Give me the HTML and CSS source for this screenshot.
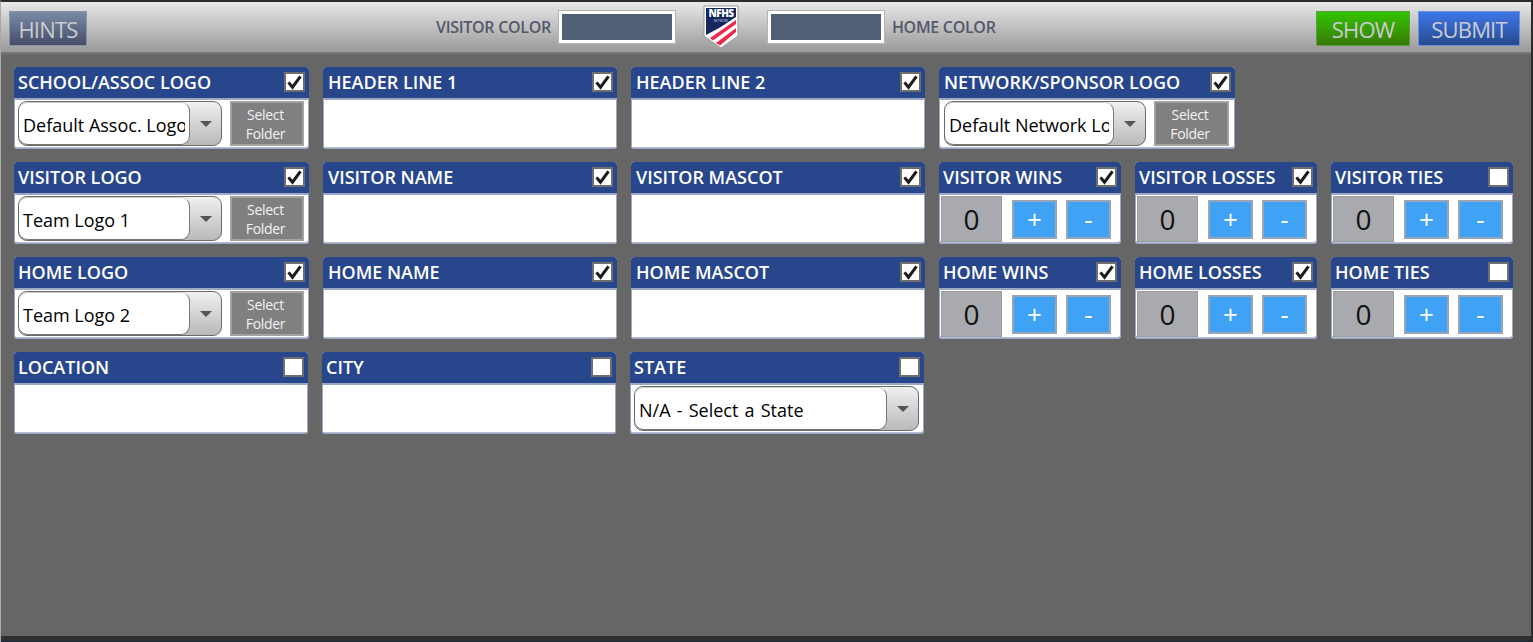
FILE: index.html
```html
<!DOCTYPE html>
<html lang="en">
<head>
    <meta charset="UTF-8">
    <title>Scoreboard Setup</title>
    <link rel="stylesheet" href="styles.css">
</head>
<body>
    <svg class="defs" width="0" height="0">
        <symbol id="tick" viewBox="0 0 20 20">
            <path d="M2.5 10.5 L7.5 16.5 L17.5 3" fill="none" stroke="#1c1c1c" stroke-width="3.8"/>
        </symbol>
    </svg>

    <header class="toolbar">
        <button class="tool-btn hints">HINTS</button>
        <div class="colors">
            <span class="color-label">VISITOR COLOR</span>
            <div class="swatch"></div>
            <svg class="shield" viewBox="0 0 36 44" width="36" height="44">
                <path d="M1 1 H35 V31 L18 43 L1 31 Z" fill="#fff" stroke="#999" stroke-width="1"/>
                <path d="M3 3 H33 V12 L18 22 L3 30 Z" fill="#14275f"/>
                <path d="M7 33 L33 15 V19 L10 35.5 Z" fill="#ec2a4b"/>
                <path d="M13 38 L33 23 V27 L17 40.5 Z" fill="#ec2a4b"/>
                <path d="M3 31.5 L33 12.5 V14 L4 33 Z" fill="#fff"/>
                <text x="18" y="12" class="shield-text">NFHS</text>
                <text x="18" y="17" class="shield-sub">NETWORK</text>
            </svg>
            <div class="swatch"></div>
            <span class="color-label">HOME COLOR</span>
        </div>
        <div class="actions">
            <button class="tool-btn show">SHOW</button>
            <button class="tool-btn submit">SUBMIT</button>
        </div>
    </header>

    <main class="panel">
        <div class="row">
            <section class="card wide first">
                <div class="card-head"><span>SCHOOL/ASSOC LOGO</span><span class="check"><svg><use href="#tick"/></svg></span></div>
                <div class="card-body picker">
                    <div class="combo"><div class="combo-text"><span class="combo-label">Default Assoc. Logo</span></div><div class="combo-arrow"></div></div>
                    <button class="folder-btn">Select Folder</button>
                </div>
            </section>
            <section class="card wide">
                <div class="card-head"><span>HEADER LINE 1</span><span class="check"><svg><use href="#tick"/></svg></span></div>
                <div class="card-body"><input class="field" type="text"></div>
            </section>
            <section class="card wide">
                <div class="card-head"><span>HEADER LINE 2</span><span class="check"><svg><use href="#tick"/></svg></span></div>
                <div class="card-body"><input class="field" type="text"></div>
            </section>
            <section class="card network">
                <div class="card-head"><span>NETWORK/SPONSOR LOGO</span><span class="check"><svg><use href="#tick"/></svg></span></div>
                <div class="card-body picker">
                    <div class="combo"><div class="combo-text"><span class="combo-label">Default Network Logo</span></div><div class="combo-arrow"></div></div>
                    <button class="folder-btn">Select Folder</button>
                </div>
            </section>
        </div>

        <div class="row">
            <section class="card wide first">
                <div class="card-head"><span>VISITOR LOGO</span><span class="check"><svg><use href="#tick"/></svg></span></div>
                <div class="card-body picker">
                    <div class="combo"><div class="combo-text"><span class="combo-label">Team Logo 1</span></div><div class="combo-arrow"></div></div>
                    <button class="folder-btn">Select Folder</button>
                </div>
            </section>
            <section class="card wide">
                <div class="card-head"><span>VISITOR NAME</span><span class="check"><svg><use href="#tick"/></svg></span></div>
                <div class="card-body"><input class="field" type="text"></div>
            </section>
            <section class="card wide">
                <div class="card-head"><span>VISITOR MASCOT</span><span class="check"><svg><use href="#tick"/></svg></span></div>
                <div class="card-body"><input class="field" type="text"></div>
            </section>
            <section class="card small">
                <div class="card-head"><span>VISITOR WINS</span><span class="check"><svg><use href="#tick"/></svg></span></div>
                <div class="card-body counter"><div class="count">0</div><button class="step">+</button><button class="step">-</button></div>
            </section>
            <section class="card small">
                <div class="card-head"><span>VISITOR LOSSES</span><span class="check"><svg><use href="#tick"/></svg></span></div>
                <div class="card-body counter"><div class="count">0</div><button class="step">+</button><button class="step">-</button></div>
            </section>
            <section class="card small">
                <div class="card-head"><span>VISITOR TIES</span><span class="check"></span></div>
                <div class="card-body counter"><div class="count">0</div><button class="step">+</button><button class="step">-</button></div>
            </section>
        </div>

        <div class="row">
            <section class="card wide first">
                <div class="card-head"><span>HOME LOGO</span><span class="check"><svg><use href="#tick"/></svg></span></div>
                <div class="card-body picker">
                    <div class="combo"><div class="combo-text"><span class="combo-label">Team Logo 2</span></div><div class="combo-arrow"></div></div>
                    <button class="folder-btn">Select Folder</button>
                </div>
            </section>
            <section class="card wide">
                <div class="card-head"><span>HOME NAME</span><span class="check"><svg><use href="#tick"/></svg></span></div>
                <div class="card-body"><input class="field" type="text"></div>
            </section>
            <section class="card wide">
                <div class="card-head"><span>HOME MASCOT</span><span class="check"><svg><use href="#tick"/></svg></span></div>
                <div class="card-body"><input class="field" type="text"></div>
            </section>
            <section class="card small">
                <div class="card-head"><span>HOME WINS</span><span class="check"><svg><use href="#tick"/></svg></span></div>
                <div class="card-body counter"><div class="count">0</div><button class="step">+</button><button class="step">-</button></div>
            </section>
            <section class="card small">
                <div class="card-head"><span>HOME LOSSES</span><span class="check"><svg><use href="#tick"/></svg></span></div>
                <div class="card-body counter"><div class="count">0</div><button class="step">+</button><button class="step">-</button></div>
            </section>
            <section class="card small">
                <div class="card-head"><span>HOME TIES</span><span class="check"></span></div>
                <div class="card-body counter"><div class="count">0</div><button class="step">+</button><button class="step">-</button></div>
            </section>
        </div>

        <div class="row row-last">
            <section class="card wide">
                <div class="card-head"><span>LOCATION</span><span class="check"></span></div>
                <div class="card-body"><input class="field" type="text"></div>
            </section>
            <section class="card wide">
                <div class="card-head"><span>CITY</span><span class="check"></span></div>
                <div class="card-body"><input class="field" type="text"></div>
            </section>
            <section class="card wide">
                <div class="card-head"><span>STATE</span><span class="check"></span></div>
                <div class="card-body picker">
                    <div class="combo combo-full"><div class="combo-text"><span class="combo-label">N/A - Select a State</span></div><div class="combo-arrow"></div></div>
                </div>
            </section>
        </div>
    </main>

    <footer class="statusbar"></footer>
</body>
</html>
```

FILE: styles.css
```css
* {
    box-sizing: border-box;
}

html, body {
    height: 100%;
}

body {
    margin: 0;
    display: flex;
    flex-direction: column;
    overflow: hidden;
    background-color: #666;
    border-top: 2px solid #2b2b2b;
    border-right: 2px solid #2b2b2b;
    border-left: 1px solid #a8a8a8;
    font-family: "Open Sans", "Noto Sans", Arial, sans-serif;
}

.defs {
    position: absolute;
}

/* top bar */
.toolbar {
    height: 52px;
    flex: none;
    display: flex;
    align-items: flex-start;
    padding: 9px 11px 0 8px;
    background: linear-gradient(#e9e9e9, #dcdcdc 15%, #999);
    border-bottom: 2px solid #777;
}

.tool-btn {
    height: 35px;
    padding: 0;
    font-family: inherit;
    font-size: 22px;
    letter-spacing: -0.8px;
    color: #c9ccd2;
    border: 1px solid #7b8aa0;
}

.hints {
    width: 78px;
    background: linear-gradient(#7a8aa5, #454e69);
    border-color: #8a94a6;
}

.colors {
    display: flex;
    align-items: flex-start;
    margin-left: 349px;
    margin-top: -1px;
}

.color-label {
    font-size: 16px;
    font-weight: 600;
    letter-spacing: -0.3px;
    color: #54586a;
    line-height: 34px;
}

.swatch {
    width: 116px;
    height: 32px;
    margin: 1px 8px;
    background-color: #526075;
    border: 3px solid #fff;
    box-shadow: 0 0 0 1px #b5b5b5;
}

.shield {
    margin: -5px 21px 0 20px;
}

.shield-text {
    font-size: 10px;
    font-weight: 800;
    fill: #fff;
    text-anchor: middle;
    letter-spacing: -0.5px;
}

.shield-sub {
    font-size: 3px;
    fill: #d0d5e5;
    text-anchor: middle;
}

.actions {
    display: flex;
    gap: 8px;
    margin-left: auto;
}

.show {
    width: 94px;
    background: linear-gradient(#33c400, #3a7a08);
    border-color: #5aa040;
}

.submit {
    width: 102px;
    background: linear-gradient(#3f77e8, #254a8e);
    border-color: #6c92d8;
}

/* cards */
.panel {
    flex: 1;
    padding: 13px 0 0 13px;
    display: flex;
    flex-direction: column;
    gap: 13px;
}

.row {
    display: flex;
    gap: 14px;
}

.card {
    height: 82px;
    display: flex;
    flex-direction: column;
    background-color: #fff;
    border-radius: 4px;
    box-shadow: inset 0 0 0 1px #9aa6c4, inset 0 -2px 0 #b4bdd2;
    overflow: hidden;
}

.wide {
    width: 294px;
}

.first {
    width: 295px;
}

.network {
    width: 296px;
}

.small {
    width: 182px;
}

.card-head {
    height: 33px;
    flex: none;
    display: flex;
    justify-content: space-between;
    align-items: center;
    padding: 0 4px 1px 4px;
    background-color: #27468c;
    border-bottom: 2px solid #9aa8c6;
    color: #fff;
    font-size: 18px;
    font-weight: 600;
}

.row:not(.row-last) .wide:not(.first) .card-head,
.network .card-head {
    padding-left: 5px;
}

.row-last .card-head {
    padding-bottom: 2px;
}

.check {
    width: 21px;
    height: 20px;
    flex: none;
    background-color: #fff;
    border: 2px solid #6e6e6e;
}

.check svg {
    display: block;
    width: 17px;
    height: 16px;
}

.card-body {
    flex: 1;
    display: flex;
    min-height: 0;
}

.field {
    width: 100%;
    margin: 0 1px 2px;
    border: none;
    outline: none;
    background-color: #fff;
}

.picker {
    padding: 1px 5px 3px 4px;
    gap: 8px;
}

.network .picker {
    padding: 1px 6px 3px 5px;
}

.combo {
    width: 204px;
    display: flex;
    border: 1px solid #6a6a6a;
    border-radius: 9px;
    background: linear-gradient(#f0f0f0, #b9b9b9);
}

.network .combo {
    width: 202px;
}

.combo-full {
    width: 286px;
}

.combo-text {
    flex: 1;
    min-width: 0;
    padding: 0 4px 0 4px;
    background-color: #fff;
    border: 1px solid #777;
    border-top-color: #ccc;
    border-left: none;
    border-radius: 9px;
}

.combo-label {
    display: block;
    padding-top: 2px;
    overflow: hidden;
    white-space: nowrap;
    font-size: 18px;
    line-height: 41px;
    color: #000;
}

.combo-full .combo-label {
    word-spacing: 1.5px;
}

.combo-arrow {
    width: 31px;
    flex: none;
    display: flex;
    align-items: center;
    justify-content: center;
}

.combo-arrow::after {
    content: "";
    border-left: 6px solid transparent;
    border-right: 6px solid transparent;
    border-top: 6px solid #555;
}

.folder-btn {
    width: 74px;
    padding: 0 8px 0 5px;
    background-color: #808080;
    border: 2px solid #a2a2a2;
    color: #f2f2f2;
    font-family: inherit;
    font-size: 14px;
    letter-spacing: -0.3px;
    line-height: 19px;
}

.network .folder-btn {
    width: 75px;
}

.counter {
    padding: 1px 0 2px 2px;
    align-items: center;
    gap: 9px;
}

.count {
    width: 61px;
    height: 100%;
    margin-right: 1px;
    background-color: #a9aab0;
    border: 1px solid #9c9da3;
    text-align: center;
    font-size: 28px;
    line-height: 44px;
    color: #111;
}

.step {
    width: 45px;
    height: 39px;
    padding: 0;
    background-color: #3fa2f5;
    border: 2px solid #9aa5b5;
    color: #fff;
    font-family: inherit;
    font-size: 26px;
    line-height: 1;
}

.statusbar {
    height: 6px;
    flex: none;
    background-color: #2f2f2f;
    border-bottom: 1px solid #1b2a33;
}
```
